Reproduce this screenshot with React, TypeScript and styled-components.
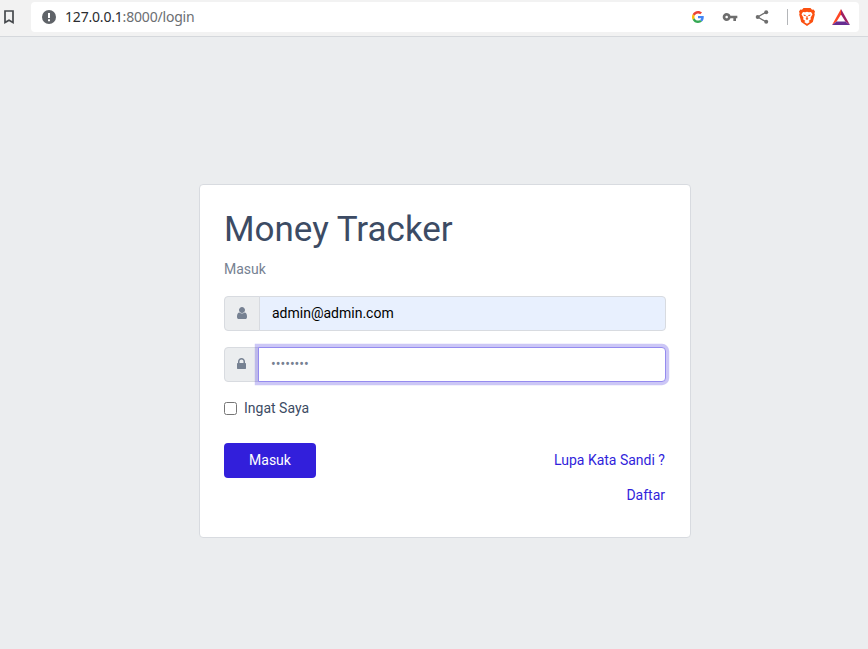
import React from "react";
import styled, { createGlobalStyle } from "styled-components";

const GlobalStyle = createGlobalStyle`
  *, *::before, *::after { box-sizing: border-box; }
  body {
    margin: 0;
    background: #ebedef;
    color: #3c4b64;
    font: 400 14px/1.5 Roboto, sans-serif;
  }
`;

const Page = styled.div`
  display: flex;
  flex-direction: column;
  height: 649px;
  overflow: hidden;
`;

const Toolbar = styled.header`
  display: flex;
  align-items: flex-start;
  flex: none;
  height: 37px;
  padding: 2px 9px 0 0;
  background: #f2f2f2;
  border-bottom: 1px solid #d5d8dc;
  svg { display: block; flex: none; }
`;

const BookmarkSlot = styled.div`
  display: flex;
  align-items: center;
  width: 31px;
  height: 30px;
  padding-left: 3px;
`;

const AddressBar = styled.div`
  display: flex;
  align-items: center;
  flex: 1;
  height: 30px;
  padding: 0 9px 0 11px;
  border-radius: 4px;
  background: #fff;
`;

const Url = styled.span`
  flex: 1;
  margin-left: 9px;
  font: 14px/20px "Noto Sans", sans-serif;
  letter-spacing: -0.19px;
  color: #6b6e72;
  b { font-weight: 400; color: #2b2d30; }
`;

const Actions = styled.div`
  display: flex;
  align-items: center;
`;

const Divider = styled.i`
  width: 1px;
  height: 16px;
  margin: 0 11px 0 18px;
  background: #b4b6b9;
`;

const Main = styled.main`
  display: flex;
  justify-content: center;
  padding: 147px 177px 0 199px;
`;

const Card = styled.form`
  width: 492px;
  height: 354px;
  padding: 24px;
  border: 1px solid #d8dbe0;
  border-radius: 4px;
  background: #fff;
`;

const Title = styled.h1`
  margin: 0 0 8px;
  font-size: 35px;
  font-weight: 400;
  line-height: 42px;
`;

const Subtitle = styled.p`
  margin: 0 0 16px;
  color: #768192;
`;

const InputGroup = styled.div`
  display: flex;
  height: 35px;
  margin-bottom: 16px;
`;

const Addon = styled.span`
  display: flex;
  align-items: center;
  padding: 0 12px 1px;
  border: 1px solid #d8dbe0;
  border-radius: 4px 0 0 4px;
  background: #ebedef;
  color: #768192;
  svg { display: block; fill: currentColor; }
`;

const Input = styled.input<{ $filled?: boolean; $active?: boolean }>`
  flex: 1;
  min-width: 0;
  margin: 0 0 0 -1px;
  padding: 0 12px;
  border: 1px solid ${(p) => (p.$active ? "#958bef" : "#d8dbe0")};
  border-radius: 0 4px 4px 0;
  outline: 0;
  background: ${(p) => (p.$filled ? "#e8f0fe" : "#fff")};
  box-shadow: ${(p) => (p.$active ? "0 0 0 3.2px rgba(50, 31, 219, 0.25)" : "none")};
  color: #000;
  font: 14px/21px Roboto, sans-serif;
  &::placeholder { color: #768192; opacity: 1; }
`;

const Remember = styled.label`
  display: flex;
  align-items: center;
  height: 21px;
  margin-bottom: 24px;
`;

const Checkbox = styled.input`
  width: 13px;
  height: 13px;
  margin: 0 7px 1px 0;
`;

const Footer = styled.div`
  display: flex;
  justify-content: space-between;
  align-items: flex-start;
`;

const Submit = styled.button`
  width: 92px;
  height: 35px;
  padding: 0;
  border: 0;
  border-radius: 4px;
  background: #321fdb;
  color: #fff;
  font: 14px/21px Roboto, sans-serif;
`;

const Links = styled.nav`
  display: flex;
  flex-direction: column;
  align-items: flex-end;
  padding-right: 1px;
`;

const TextLink = styled.a`
  color: #321fdb;
  line-height: 35px;
  text-decoration: none;
`;

const BookmarkIcon = () => (
  <svg width="12" height="16" viewBox="0 0 12 16">
    <path d="M2 2h8v11.600l-4-2.400-4 2.400z" fill="none" stroke="#46494d" strokeWidth="1.7" />
  </svg>
);

const InfoIcon = () => (
  <svg width="14" height="14" viewBox="0 0 14 14">
    <circle cx="7" cy="7" r="7" fill="#5f6368" />
    <path d="M6 3h2v5H6zM6 9.2h2v2H6z" fill="#fff" />
  </svg>
);

const GoogleIcon = () => (
  <svg width="12" height="12" viewBox="0 0 48 48">
    <path fill="#EA4335" d="M24 9.5c3.54 0 6.71 1.22 9.21 3.6l6.85-6.85C35.9 2.38 30.47 0 24 0 14.62 0 6.51 5.38 2.56 13.22l7.98 6.19C12.43 13.72 17.74 9.5 24 9.5z" />
    <path fill="#4285F4" d="M46.98 24.55c0-1.57-.15-3.09-.38-4.55H24v9.02h12.94c-.58 2.96-2.26 5.48-4.78 7.18l7.73 6c4.51-4.18 7.09-10.36 7.09-17.65z" />
    <path fill="#FBBC05" d="M10.53 28.59c-.48-1.45-.76-2.99-.76-4.59s.27-3.14.76-4.59l-7.98-6.19C.92 16.46 0 20.12 0 24c0 3.88.92 7.54 2.56 10.78l7.97-6.19z" />
    <path fill="#34A853" d="M24 48c6.48 0 11.93-2.13 15.89-5.81l-7.73-6c-2.15 1.45-4.92 2.3-8.16 2.3-6.26 0-11.57-4.22-13.47-9.91l-7.98 6.19C6.51 42.62 14.62 48 24 48z" />
  </svg>
);

const KeyIcon = () => (
  <svg width="16" height="16" viewBox="0 0 24 24">
    <path fill="#6e6e6e" d="M12.65 10C11.83 7.67 9.61 6 7 6c-3.31 0-6 2.69-6 6s2.69 6 6 6c2.61 0 4.83-1.67 5.65-4H17v4h4v-4h2v-4H12.65zM7 14c-1.1 0-2-.9-2-2s.9-2 2-2 2 .9 2 2-.9 2-2 2z" />
  </svg>
);

const ShareIcon = () => (
  <svg width="14" height="14" viewBox="0 0 14 14">
    <path d="M11 2.2 2.8 7l8.2 4.8" fill="none" stroke="#6e6e6e" strokeWidth="1.3" />
    <g fill="#6e6e6e">
      <circle cx="11.2" cy="2.3" r="2" />
      <circle cx="2.7" cy="7" r="2" />
      <circle cx="11.2" cy="11.7" r="2" />
    </g>
  </svg>
);

const BraveIcon = () => (
  <svg width="16" height="18" viewBox="0 0 16 18">
    <path fill="#fb5010" d="M4.500 0h7L13 1.700l1.600-.1L16 3.600l-.6 1.600.4 1.300-2 7.400L8 18l-5.800-4.100L.2 6.500l.4-1.300L0 3.600l1.400-2 1.600.1z" />
    <path fill="#fff" d="m4 3.900 2.200.4L8 3.800l1.800.5 2.200-.4 1.500 2.300-2 3.600.4 1.400-2.300 1.800 1.200.9L8 15.700l-2.800-1.800 1.200-.9-2.300-1.800.4-1.400-2-3.600z" />
    <path fill="#fb5010" d="m4.300 6.500 2.500.6-.3 1.100-1.600-.4zm7.400 0-2.500.6.3 1.100 1.600-.4zM7.500 8h1l.2 2.300.8.500L8 11.900l-1.500-1.100.8-.5z" />
  </svg>
);

const BatIcon = () => (
  <svg width="18" height="16" viewBox="0 0 18 16">
    <path fill="#ff4724" d="M9 0v5.400L4.600 12.400 0 16z" />
    <path fill="#9e1f63" d="M9 0v5.400l4.400 7L18 16z" />
    <path fill="#662d91" d="M0 16h18l-4.600-3.600H4.600z" />
  </svg>
);

const UserIcon = () => (
  <svg width="10" height="14" viewBox="256 0 1280 1792">
    <path d="M1536 1399q0 109-62.5 187t-150.5 78h-854q-88 0-150.5-78t-62.5-187q0-85 8.5-160.5t31.5-152 58.5-131 94-89 134.5-34.5q131 128 313 128t313-128q76 0 134.5 34.5t94 89 58.5 131 31.5 152 8.5 160.5zm-256-887q0 159-112.5 271.5t-271.5 112.5-271.5-112.5-112.5-271.5 112.5-271.5 271.5-112.5 271.5 112.5 112.5 271.5z" />
  </svg>
);

const LockIcon = () => (
  <svg width="9" height="14" viewBox="320 0 1152 1792">
    <path d="M640 768h512v-192q0-106-75-181t-181-75-181 75-75 181v192zm832 96v576q0 40-28 68t-68 28h-960q-40 0-68-28t-28-68v-576q0-40 28-68t68-28h32v-192q0-184 132-316t316-132 316 132 132 316v192h32q40 0 68 28t28 68z" />
  </svg>
);

const Gap = styled.span<{ $w: number }>`
  width: ${(p) => p.$w}px;
`;

export default function App() {
  return (
    <Page>
      <GlobalStyle />
      <Toolbar>
        <BookmarkSlot><BookmarkIcon /></BookmarkSlot>
        <AddressBar>
          <InfoIcon />
          <Url><b>127.0.0.1</b>:8000/login</Url>
          <Actions>
            <GoogleIcon />
            <Gap $w={18} />
            <KeyIcon />
            <Gap $w={17} />
            <ShareIcon />
            <Divider />
            <BraveIcon />
            <Gap $w={17} />
            <BatIcon />
          </Actions>
        </AddressBar>
      </Toolbar>
      <Main>
        <Card>
          <Title>Money Tracker</Title>
          <Subtitle>Masuk</Subtitle>
          <InputGroup>
            <Addon><UserIcon /></Addon>
            <Input $filled type="text" defaultValue="admin@admin.com" />
          </InputGroup>
          <InputGroup>
            <Addon><LockIcon /></Addon>
            <Input $active type="password" placeholder="••••••••" />
          </InputGroup>
          <Remember><Checkbox type="checkbox" />Ingat Saya</Remember>
          <Footer>
            <Submit type="button">Masuk</Submit>
            <Links>
              <TextLink href="#">Lupa Kata Sandi ?</TextLink>
              <TextLink href="#">Daftar</TextLink>
            </Links>
          </Footer>
        </Card>
      </Main>
    </Page>
  );
}
